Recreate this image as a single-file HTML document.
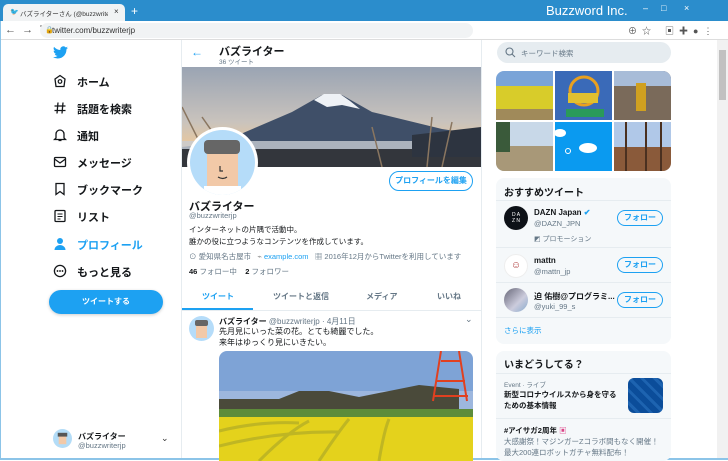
<!DOCTYPE html>
<html><head><meta charset="utf-8"><style>
*{margin:0;padding:0;box-sizing:border-box}
body{width:728px;height:460px;overflow:hidden;position:relative;background:#fff;font-family:"Liberation Sans","Noto Sans CJK JP",sans-serif;color:#14171a}
.a{position:absolute;white-space:nowrap}
.g{color:#657786}
.b{color:#1da1f2}
.bold{font-weight:bold}
.nav{font-size:11px;font-weight:bold;left:77px}
.ic{position:absolute;left:53px;width:14px;height:14px}
.fb{position:absolute;left:617px;width:46px;height:16px;border:1px solid #1da1f2;border-radius:9px;color:#1da1f2;font-size:8px;font-weight:bold;text-align:center;line-height:14px}
</style></head><body>
<!-- title bar -->
<div class="a" style="left:0;top:0;width:728px;height:21px;background:#2b8dcc"></div>
<div class="a" style="left:3px;top:4px;width:122px;height:17px;background:#f1f3f4;border-radius:5px 5px 0 0"></div>
<div class="a" style="left:10px;top:8px;font-size:7px;color:#1da1f2">🐦</div>
<div class="a" style="left:20px;top:8px;width:88px;overflow:hidden;font-size:6.5px;color:#333">バズライターさん (@buzzwriterjp) / T</div>
<div class="a" style="left:114px;top:7px;font-size:8px;color:#333">×</div>
<div class="a" style="left:131px;top:4px;font-size:12px;color:#fff">+</div>
<div class="a" style="left:546px;top:3px;font-size:13px;color:#fff">Buzzword Inc.</div>
<div class="a" style="left:643px;top:3px;font-size:9px;color:#fff">–</div>
<div class="a" style="left:661px;top:3px;font-size:9px;color:#fff">□</div>
<div class="a" style="left:684px;top:3px;font-size:9px;color:#fff">×</div>
<!-- address bar -->
<div class="a" style="left:0;top:21px;width:728px;height:19px;background:#fff;border-bottom:1px solid #ddd"></div>
<div class="a" style="left:5px;top:23px;font-size:11px;color:#555">←&nbsp;&nbsp;→&nbsp;&nbsp;↻</div>
<div class="a" style="left:40px;top:23px;width:433px;height:15px;background:#f1f3f4;border-radius:8px"></div>
<div class="a" style="left:45px;top:26px;font-size:7px;color:#555">🔒</div>
<div class="a" style="left:52px;top:26px;font-size:8px;color:#333">twitter.com/buzzwriterjp</div>
<div class="a" style="left:628px;top:24px;font-size:9px;color:#555">⊕&nbsp;&nbsp;☆</div>
<div class="a" style="left:665px;top:24px;font-size:9px;color:#555">▣&nbsp;&nbsp;✚&nbsp;&nbsp;●&nbsp;&nbsp;⋮</div>
<!-- window border -->
<div class="a" style="left:0;top:21px;width:1px;height:439px;background:#8cc4e8"></div>
<div class="a" style="left:0;top:458px;width:728px;height:2px;background:#8cc4e8"></div>
<!-- scrollbar -->
<div class="a" style="left:717px;top:40px;width:11px;height:418px;background:#f1f1f1"></div>
<div class="a" style="left:719px;top:50px;width:7px;height:50px;background:#c1c1c1"></div>
<!-- left nav -->
<svg class="a" style="left:53px;top:46px" width="15" height="13" viewBox="0 0 24 20"><path fill="#1da1f2" d="M24 2.4a10 10 0 0 1-2.8.8A5 5 0 0 0 23.3.5a10 10 0 0 1-3.1 1.2A4.9 4.9 0 0 0 11.8 6 14 14 0 0 1 1.7.9a4.9 4.9 0 0 0 1.5 6.6A4.9 4.9 0 0 1 1 6.9a4.9 4.9 0 0 0 3.9 4.9 5 5 0 0 1-2.2.1 4.9 4.9 0 0 0 4.6 3.4A9.9 9.9 0 0 1 0 17.3 14 14 0 0 0 7.5 19.5c9.1 0 14-7.5 14-14v-.6A10 10 0 0 0 24 2.4z"/></svg>
<svg class="ic" style="top:74px" viewBox="0 0 14 14"><path d="M2 5L7 1.5 12 5 11 12.5H3z" fill="none" stroke="#14171a" stroke-width="1.3"/><circle cx="7" cy="7.5" r="1.8" fill="none" stroke="#14171a" stroke-width="1.2"/></svg>
<div class="a nav" style="top:74px">ホーム</div>
<svg class="ic" style="top:101px" viewBox="0 0 14 14"><path d="M5 1.5L4 12.5M10 1.5L9 12.5M1.5 5H12.5M1.5 9.5H12.5" stroke="#14171a" stroke-width="1.3"/></svg>
<div class="a nav" style="top:101px">話題を検索</div>
<svg class="ic" style="top:128px" viewBox="0 0 14 14"><path d="M3 10V6a4 4 0 0 1 8 0v4l1.5 1.5h-11zM5.5 12.5h3" fill="none" stroke="#14171a" stroke-width="1.3"/></svg>
<div class="a nav" style="top:128px">通知</div>
<svg class="ic" style="top:155px" viewBox="0 0 14 14"><rect x="1.5" y="2.5" width="11" height="9" rx="1" fill="none" stroke="#14171a" stroke-width="1.3"/><path d="M1.5 4L7 8l5.5-4" fill="none" stroke="#14171a" stroke-width="1.3"/></svg>
<div class="a nav" style="top:155px">メッセージ</div>
<svg class="ic" style="top:182px" viewBox="0 0 14 14"><path d="M3 1.5h8v11L7 9.5 3 12.5z" fill="none" stroke="#14171a" stroke-width="1.3"/></svg>
<div class="a nav" style="top:182px">ブックマーク</div>
<svg class="ic" style="top:209px" viewBox="0 0 14 14"><rect x="2" y="1.5" width="10" height="11" rx="1" fill="none" stroke="#14171a" stroke-width="1.3"/><path d="M4.5 5h5M4.5 7.5h5M4.5 10h3" stroke="#14171a" stroke-width="1.1"/></svg>
<div class="a nav" style="top:209px">リスト</div>
<svg class="ic" style="top:237px" viewBox="0 0 14 14"><circle cx="7" cy="4" r="3" fill="#1da1f2"/><path d="M1.5 13a5.5 5 0 0 1 11 0z" fill="#1da1f2"/></svg>
<div class="a nav b" style="top:237px">プロフィール</div>
<svg class="ic" style="top:264px" viewBox="0 0 14 14"><circle cx="7" cy="7" r="5.6" fill="none" stroke="#14171a" stroke-width="1.3"/><circle cx="4.5" cy="7" r=".9"/><circle cx="7" cy="7" r=".9"/><circle cx="9.5" cy="7" r=".9"/></svg>
<div class="a nav" style="top:264px">もっと見る</div>
<div class="a" style="left:49px;top:290px;width:114px;height:24px;background:#1da1f2;border-radius:12px;color:#fff;font-size:8px;font-weight:bold;text-align:center;line-height:24px;box-shadow:0 1px 3px rgba(0,0,0,.2)">ツイートする</div>
<svg class="a" style="left:53px;top:429px" width="19" height="19" viewBox="0 0 20 20"><circle cx="10" cy="10" r="10" fill="#b3dcf7"/><rect x="6" y="7" width="8" height="9" fill="#f2c9a8"/><rect x="5" y="4" width="10" height="4" fill="#555"/></svg>
<div class="a bold" style="left:78px;top:431px;font-size:8px">バズライター</div>
<div class="a g" style="left:78px;top:441px;font-size:7.5px">@buzzwriterjp</div>
<div class="a" style="left:161px;top:433px;font-size:9px;color:#333">⌄</div>
<!-- center column -->
<div class="a" style="left:181px;top:40px;width:1px;height:418px;background:#e6ecf0"></div>
<div class="a" style="left:481px;top:40px;width:1px;height:418px;background:#e6ecf0"></div>
<div class="a b" style="left:191px;top:45px;font-size:12px">←</div>
<div class="a bold" style="left:219px;top:43px;font-size:11px">バズライター</div>
<div class="a g" style="left:219px;top:56px;font-size:6.5px">36 ツイート</div>
<!-- banner -->
<svg class="a" style="left:182px;top:67px" width="299" height="100" viewBox="0 0 299 100">
<defs><linearGradient id="sk" x1="0" y1="0" x2="0" y2="1"><stop offset="0" stop-color="#9aa4b3"/><stop offset=".55" stop-color="#c9c3bd"/><stop offset=".75" stop-color="#e4c7a2"/></linearGradient></defs>
<rect width="299" height="100" fill="url(#sk)"/>
<path d="M40 75L110 45 140 28 160 28 190 45 260 62 299 68V100H0V80z" fill="#3f4f68"/>
<path d="M132 33L142 27 158 27 168 34 178 42 160 38 145 40z" fill="#eef1f5"/>
<rect y="74" width="299" height="8" fill="#c8ccd2" opacity=".8"/>
<rect y="82" width="299" height="18" fill="#33363c"/>
<path d="M230 68L299 60V90H230z" fill="#2d3440"/>
<path d="M0 40L30 100M20 50L55 100M250 50L245 100M270 55L260 100M190 60L200 100" stroke="#8a7660" stroke-width="1.5"/>
</svg>
<div class="a" style="left:187px;top:127px;width:71px;height:71px;border-radius:50%;background:#fff"></div>
<svg class="a" style="left:190px;top:130px" width="65" height="65" viewBox="0 0 65 65"><defs><clipPath id="cc"><circle cx="32.5" cy="32.5" r="32.5"/></clipPath></defs><g clip-path="url(#cc)"><rect width="65" height="65" fill="#b5dcf9"/><rect x="17" y="20" width="31" height="40" fill="#f2c9a8"/><rect x="14" y="10" width="36" height="14" fill="#666" rx="4"/><rect x="14" y="56" width="37" height="10" fill="#fff"/><path d="M30 36v5h3M28 47q5 3 9 0" stroke="#333" fill="none" stroke-width="1.2"/></g></svg>
<div class="a" style="left:389px;top:171px;width:84px;height:20px;border:1px solid #1da1f2;border-radius:10px;color:#1da1f2;font-size:8px;font-weight:bold;text-align:center;line-height:18px">プロフィールを編集</div>
<div class="a bold" style="left:189px;top:198px;font-size:11px">バズライター</div>
<div class="a g" style="left:189px;top:211px;font-size:7.5px">@buzzwriterjp</div>
<div class="a" style="left:189px;top:224px;font-size:7.5px;line-height:12px">インターネットの片隅で活動中。<br>誰かの役に立つようなコンテンツを作成しています。</div>
<div class="a g" style="left:189px;top:251px;font-size:7.5px">⊙ 愛知県名古屋市&nbsp;&nbsp;&nbsp;<span style="color:#888">⌁</span> <span class="b">example.com</span>&nbsp;&nbsp;&nbsp;▦ 2016年12月からTwitterを利用しています</div>
<div class="a" style="left:189px;top:266px;font-size:7.5px"><b>46</b> <span class="g">フォロー中</span>&nbsp;&nbsp;&nbsp;&nbsp;<b>2</b> <span class="g">フォロワー</span></div>
<div class="a bold b" style="left:202px;top:291px;font-size:8px">ツイート</div>
<div class="a bold g" style="left:273px;top:291px;font-size:8px">ツイートと返信</div>
<div class="a bold g" style="left:366px;top:291px;font-size:8px">メディア</div>
<div class="a bold g" style="left:437px;top:291px;font-size:8px">いいね</div>
<div class="a" style="left:182px;top:308px;width:71px;height:2px;background:#1da1f2"></div>
<div class="a" style="left:182px;top:310px;width:299px;height:1px;background:#e6ecf0"></div>
<svg class="a" style="left:189px;top:316px" width="25" height="25" viewBox="0 0 25 25"><circle cx="12.5" cy="12.5" r="12.5" fill="#b5dcf9"/><rect x="7" y="8" width="11" height="14" fill="#f2c9a8"/><rect x="6" y="4" width="13" height="6" rx="2" fill="#666"/></svg>
<div class="a" style="left:219px;top:316px;font-size:8px"><b>バズライター</b> <span class="g">@buzzwriterjp · 4月11日</span></div>
<div class="a g" style="left:465px;top:314px;font-size:9px">⌄</div>
<div class="a" style="left:219px;top:326px;font-size:8px;line-height:11px">先月見にいった菜の花。とても綺麗でした。<br>来年はゆっくり見にいきたい。</div>
<svg class="a" style="left:219px;top:351px" width="254" height="110" viewBox="0 0 254 110"><defs><clipPath id="ic"><rect width="254" height="120" rx="8"/></clipPath></defs><g clip-path="url(#ic)"><rect width="254" height="60" fill="#7ea3d6"/><rect y="40" width="254" height="20" fill="#9db7de"/><path d="M0 48h60l20-8h30l30 6 60-12 40 4v20H0z" fill="#4a4a3a"/><rect y="58" width="254" height="12" fill="#5d8c3a"/><rect y="66" width="254" height="50" fill="#e4d21c"/><path d="M0 80q40-10 80-8M0 95q60-15 120-14M40 110q30-30 50-40M100 110q20-30 30-42M160 110q5-30 10-42" stroke="#9a9a2a" stroke-width="3" fill="none" opacity=".5"/><path d="M222 0l-8 50M240 0l8 50M222 10h20M218 30h28M215 45h34" stroke="#e04020" stroke-width="2" fill="none"/></g></svg>
<!-- right column -->
<div class="a" style="left:497px;top:42px;width:174px;height:21px;background:#e6ecf0;border-radius:11px"></div>
<svg class="a" style="left:505px;top:47px" width="11" height="11" viewBox="0 0 11 11"><circle cx="4.5" cy="4.5" r="3.5" fill="none" stroke="#657786" stroke-width="1.1"/><path d="M7 7l3 3" stroke="#657786" stroke-width="1.1"/></svg>
<div class="a g" style="left:521px;top:48px;font-size:7.5px">キーワード検索</div>
<svg class="a" style="left:496px;top:71px" width="175" height="100" viewBox="0 0 175 100"><defs><clipPath id="gc"><rect width="175" height="100" rx="8"/></clipPath></defs><g clip-path="url(#gc)">
<rect width="57" height="49" fill="#7aa4d8"/><rect y="15" width="57" height="34" fill="#d8cc2a"/><rect y="38" width="57" height="11" fill="#a08a5a"/>
<rect x="59" width="57" height="49" fill="#3a6ab8"/><circle cx="88" cy="20" r="14" fill="none" stroke="#e8a020" stroke-width="3"/><rect x="72" y="22" width="30" height="10" fill="#e0c030"/><rect x="70" y="38" width="38" height="8" fill="#2a9a5a"/>
<rect x="118" width="57" height="49" fill="#7a6a5a"/><rect x="118" width="57" height="15" fill="#a8bcd8"/><rect x="140" y="12" width="10" height="28" fill="#d0a020"/>
<rect y="51" width="57" height="49" fill="#c8d8e8"/><rect y="75" width="57" height="25" fill="#a89878"/><rect y="51" width="14" height="30" fill="#3a5a3a"/>
<rect x="59" y="51" width="57" height="49" fill="#0a9af0"/><ellipse cx="92" cy="77" rx="9" ry="5" fill="#fff"/><ellipse cx="64" cy="62" rx="6" ry="4" fill="#fff"/><circle cx="72" cy="80" r="2.5" fill="none" stroke="#fff"/>
<rect x="118" y="51" width="57" height="49" fill="#8a5a3a"/><rect x="118" y="51" width="57" height="25" fill="#b0c8e8"/><path d="M130 51v49M150 51v49M165 51v49" stroke="#4a3020" stroke-width="2"/>
</g></svg>
<div class="a" style="left:496px;top:178px;width:175px;height:166px;background:#f5f8fa;border-radius:8px"></div>
<div class="a bold" style="left:504px;top:184px;font-size:10px">おすすめツイート</div>
<div class="a" style="left:496px;top:200px;width:175px;height:1px;background:#e6ecf0"></div>
<div class="a" style="left:504px;top:206px;width:24px;height:24px;border-radius:50%;background:#0d1117;color:#fff;font-size:5px;text-align:center;line-height:6px;padding-top:6px">D A<br>Z N</div>
<div class="a bold" style="left:534px;top:208px;font-size:8px">DAZN Japan <span class="b">✔</span></div>
<div class="a g" style="left:534px;top:219px;font-size:7.5px">@DAZN_JPN</div>
<div class="a g" style="left:534px;top:234px;font-size:7px">◩ プロモーション</div>
<div class="fb" style="top:210px">フォロー</div>
<div class="a" style="left:496px;top:247px;width:175px;height:1px;background:#e6ecf0"></div>
<div class="a" style="left:504px;top:254px;width:24px;height:24px;border-radius:50%;background:#fff;border:1px solid #eee;color:#a33;font-size:10px;text-align:center;line-height:22px">☺</div>
<div class="a bold" style="left:534px;top:256px;font-size:8px">mattn</div>
<div class="a g" style="left:534px;top:267px;font-size:7.5px">@mattn_jp</div>
<div class="fb" style="top:257px">フォロー</div>
<div class="a" style="left:496px;top:282px;width:175px;height:1px;background:#e6ecf0"></div>
<div class="a" style="left:504px;top:288px;width:24px;height:24px;border-radius:50%;background:linear-gradient(135deg,#667,#ccd 60%,#8ac)"></div>
<div class="a bold" style="left:534px;top:291px;font-size:8px">迫 佑樹@プログラミ...</div>
<div class="a g" style="left:534px;top:302px;font-size:7.5px">@yuki_99_s</div>
<div class="fb" style="top:292px">フォロー</div>
<div class="a" style="left:496px;top:317px;width:175px;height:1px;background:#e6ecf0"></div>
<div class="a b" style="left:504px;top:325px;font-size:7.5px">さらに表示</div>
<div class="a" style="left:496px;top:351px;width:175px;height:110px;background:#f5f8fa;border-radius:8px"></div>
<div class="a bold" style="left:504px;top:356px;font-size:10px">いまどうしてる？</div>
<div class="a" style="left:496px;top:373px;width:175px;height:1px;background:#e6ecf0"></div>
<div class="a g" style="left:504px;top:379px;font-size:6.5px">Event · ライブ</div>
<div class="a bold" style="left:504px;top:389px;font-size:7.5px;line-height:11px">新型コロナウイルスから身を守る<br>ための基本情報</div>
<div class="a" style="left:628px;top:378px;width:35px;height:35px;border-radius:6px;background:repeating-linear-gradient(45deg,#0b4d9a 0 6px,#1d63b0 6px 9px)"></div>
<div class="a" style="left:496px;top:418px;width:175px;height:1px;background:#e6ecf0"></div>
<div class="a bold" style="left:504px;top:425px;font-size:7.5px">#アイサガ2周年 <span style="color:#d48">▣</span></div>
<div class="a g" style="left:504px;top:436px;font-size:7.5px;line-height:11px">大感謝祭！マジンガーZコラボ間もなく開催！<br>最大200連ロボットガチャ無料配布！</div>
</body></html>
